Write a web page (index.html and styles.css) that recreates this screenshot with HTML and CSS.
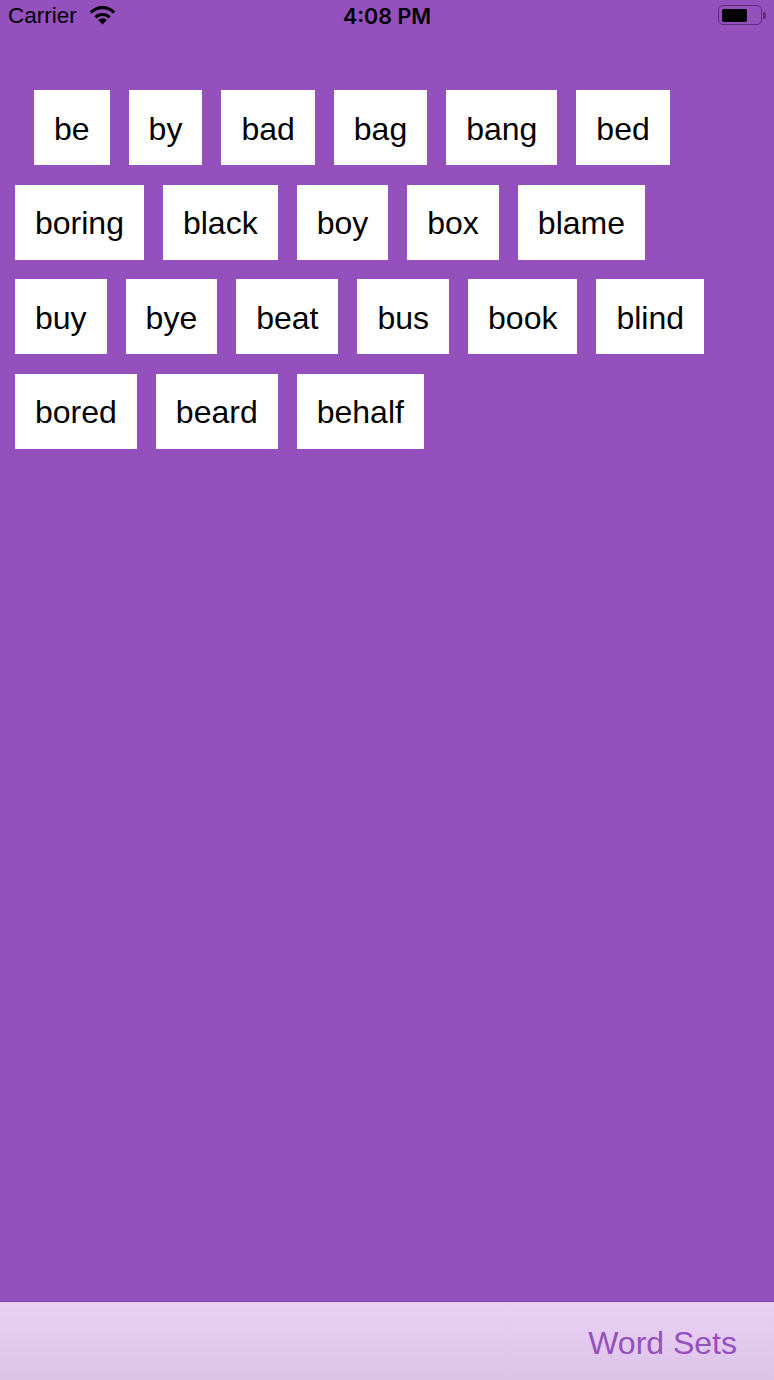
FILE: index.html
```html
<!DOCTYPE html>
<html>
<head>
<meta charset="utf-8">
<link rel="stylesheet" href="styles.css">
</head>
<body>
<div class="screen">
  <div class="status">
    <div class="status-left">
      <span class="carrier">Carrier</span>
      <svg class="wifi" width="27" height="20" viewBox="0 0 27 20">
        <path d="M13.5 19.5 L9.2 15 A6.2 6.2 0 0 1 17.8 15 Z" fill="#000"/>
        <path d="M5.4 11.2 A11.6 11.6 0 0 1 21.6 11.2 L19.4 13.4 A8.5 8.5 0 0 0 7.6 13.4 Z" fill="#000"/>
        <path d="M0.6 6.4 A18.4 18.4 0 0 1 26.4 6.4 L24.2 8.6 A15.3 15.3 0 0 0 2.8 8.6 Z" fill="#000"/>
      </svg>
    </div>
    <div class="time">4:08 PM</div>
    <div class="status-right">
      <div class="battery"><div class="battery-level"></div></div>
      <div class="battery-nub"></div>
    </div>
  </div>
  <div class="content">
    <div class="row first">
      <div class="tile">be</div>
      <div class="tile">by</div>
      <div class="tile">bad</div>
      <div class="tile">bag</div>
      <div class="tile">bang</div>
      <div class="tile">bed</div>
    </div>
    <div class="row">
      <div class="tile">boring</div>
      <div class="tile">black</div>
      <div class="tile">boy</div>
      <div class="tile">box</div>
      <div class="tile">blame</div>
    </div>
    <div class="row">
      <div class="tile">buy</div>
      <div class="tile">bye</div>
      <div class="tile">beat</div>
      <div class="tile">bus</div>
      <div class="tile">book</div>
      <div class="tile">blind</div>
    </div>
    <div class="row">
      <div class="tile">bored</div>
      <div class="tile">beard</div>
      <div class="tile">behalf</div>
    </div>
  </div>
  <div class="toolbar">
    <span class="toolbar-button">Word Sets</span>
  </div>
</div>
</body>
</html>
```
FILE: styles.css
```css
html, body {
  margin: 0;
  padding: 0;
}
body {
  background: #9450bd;
  font-family: "Liberation Sans", Arial, sans-serif;
}
.screen {
  display: flex;
  flex-direction: column;
  height: 1380px;
  width: 774px;
}
.status {
  height: 40px;
  display: flex;
  align-items: flex-start;
  justify-content: space-between;
  padding: 0 0 0 8px;
  position: relative;
}
.status-left {
  display: flex;
  align-items: center;
  gap: 12px;
  height: 32px;
}
.carrier {
  font-size: 22.5px;
  color: #000;
}
.wifi {
  margin-top: -2px;
}
.time {
  position: absolute;
  left: 0;
  right: 0;
  top: 0;
  height: 32px;
  line-height: 32px;
  text-align: center;
  font-family: Inter, "Liberation Sans", sans-serif;
  font-size: 21.5px;
  font-weight: 600;
  color: #000;
  pointer-events: none;
}
.status-right {
  display: flex;
  align-items: center;
  height: 30px;
}
.battery {
  width: 44px;
  height: 20px;
  box-sizing: border-box;
  border: 1.5px solid #5e2d80;
  border-radius: 5px;
  padding: 2.5px 3px;
  display: flex;
}
.battery-level {
  width: 25px;
  background: #000;
  border-radius: 2px;
}
.battery-nub {
  width: 3px;
  height: 7px;
  margin-left: 1px;
  background: #5e2d80;
  border-radius: 0 2px 2px 0;
  margin-right: 8px;
}
.content {
  flex: 1;
  padding-top: 50px;
  display: flex;
  flex-direction: column;
  gap: 19.5px;
}
.row {
  display: flex;
  gap: 19px;
  padding-left: 15px;
}
.row.first {
  padding-left: 34px;
}
.tile {
  background: #fff;
  height: 75px;
  box-sizing: border-box;
  padding: 3px 20px 0;
  display: flex;
  align-items: center;
  justify-content: center;
  font-size: 32px;
  color: #000;
}
.toolbar {
  height: 79px;
  border-top: 1px solid #7f3fa8;
  background: linear-gradient(#ead0f5, #dcc3e7);
  display: flex;
  align-items: center;
  justify-content: flex-end;
  padding: 4px 37px 0 0;
  box-sizing: border-box;
}
.toolbar-button {
  font-size: 32px;
  color: #9450bd;
}
```
